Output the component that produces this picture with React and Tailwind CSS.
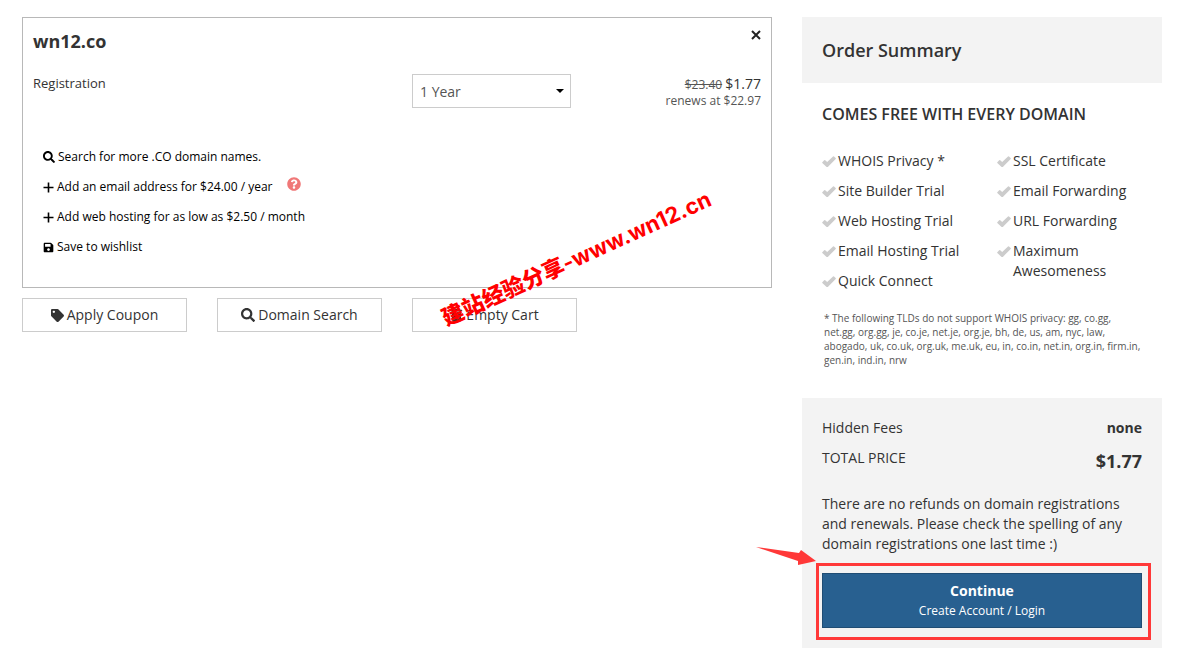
import { useState } from "react";
import { FaSearch, FaSave, FaTag, FaTrash, FaQuestionCircle } from "react-icons/fa";


const freeLeft = ["WHOIS Privacy *", "Site Builder Trial", "Web Hosting Trial", "Email Hosting Trial", "Quick Connect"];
const freeRight = ["SSL Certificate", "Email Forwarding", "URL Forwarding", "Maximum Awesomeness"];

const CheckIcon = () => (
	<svg viewBox="0 0 14 12" className="flex-none w-[14px] h-3 mt-[5px]" fill="#ccc">
		<path d="M0.3 6.2L2.2 4.2Q2.7 3.8 3.2 4.2L5.2 6L11 0.4Q11.5 0 12 0.4L13.7 2.1Q14 2.5 13.7 3L5.8 10.9Q5.2 11.3 4.6 10.9L0.3 7.1Q0 6.6 0.3 6.2Z" />
	</svg>
);

const PlusIcon = () => (
	<svg viewBox="0 0 11 11" className="size-[11px]" stroke="#000" strokeWidth="1.6">
		<path d="M5.5 0.5V10.5M0.5 5.5H10.5" />
	</svg>
);

const FeatureList = ({items}) => (
	<ul className="flex flex-col gap-[10px]">
		{items.map((item) => (
			<li key={item} className="flex gap-[2px] leading-5">
				<CheckIcon />
				<span>{item}</span>
			</li>
		))}
	</ul>
);

const ActionLink = ({icon, children}) => (
	<a href="#" className="flex items-center gap-[3px] h-[30px] w-max text-xs text-black">
		{icon}
		{children}
	</a>
);

const CartButton = ({icon, children}) => (
	<button className="flex items-center justify-center gap-[3px] h-[34px] bg-white border border-[#ccc] text-sm text-[#333]">
		{icon}
		{children}
	</button>
);

const CartItem = () => {
	let [term, setTerm] = useState("1");

	return (
		<div className="border border-[#b8b8b8] px-[10px] pt-[11px] pb-[25px]">
			<div className="flex justify-between items-start">
				<h2 className="text-lg leading-6 font-bold">wn12.co</h2>
				<button aria-label="Remove" className="flex size-[10px] mt-[1px]">
					<svg viewBox="0 0 10 10" className="size-[10px]" stroke="#222" strokeWidth="2">
						<path d="M1 1L9 9M9 1L1 9" />
					</svg>
				</button>
			</div>

			<div className="grid grid-cols-[379fr_159fr_190fr] mt-5">
				<label htmlFor="term" className="text-[13px] leading-5">Registration</label>
				<div className="relative mt-[1px]">
					<select id="term" value={term} onChange={(e) => setTerm(e.target.value)}
						className="appearance-none w-full h-[34px] pl-[7px] pt-[2px] bg-white border border-[#ccc] text-sm text-[#555]">
						<option value="1">1 Year</option>
						<option value="2">2 Years</option>
						<option value="5">5 Years</option>
					</select>
					<svg viewBox="0 0 8 4" className="absolute right-[7px] top-[15px] w-2 h-1 pointer-events-none">
						<path d="M0 0H8L4 4Z" />
					</svg>
				</div>
				<div className="text-right text-xs leading-4 text-[#555] pt-[3px]">
					<p><del>$23.40</del> <span className="text-sm leading-4 text-[#333]">$1.77</span></p>
					<p>renews at $22.97</p>
				</div>
			</div>

			{/* Extras */}
			<div className="mt-[33px] ml-[10px]">
				<ActionLink icon={<FaSearch className="size-3" />}>Search for more .CO domain names.</ActionLink>
				<div className="flex gap-[15px]">
					<ActionLink icon={<PlusIcon />}>Add an email address for $24.00 / year</ActionLink>
					<FaQuestionCircle className="size-[14px] mt-[5px] text-[#f07878]" />
				</div>
				<ActionLink icon={<PlusIcon />}>Add web hosting for as low as $2.50 / month</ActionLink>
				<ActionLink icon={<FaSave className="size-[11px]" />}>Save to wishlist</ActionLink>
			</div>
		</div>
	);
}

const OrderSummary = () => (
	<aside className="text-sm">
		<h2 className="bg-[#f3f3f3] px-5 py-[21px] text-lg leading-6 font-semibold">Order Summary</h2>

		<div className="px-5 pt-[19px] pb-[31px]">
			<h3 className="text-base leading-6 font-semibold">COMES FREE WITH EVERY DOMAIN</h3>
			<div className="grid grid-cols-[175fr_145fr] mt-[25px]">
				<FeatureList items={freeLeft} />
				<FeatureList items={freeRight} />
			</div>
			<p className="mt-5 ml-[2px] -mr-[2px] text-[10px] leading-[14px] text-[#555]">
				* The following TLDs do not support WHOIS privacy: gg, co.gg, net.gg, org.gg, je, co.je, net.je, org.je, bh, de, us, am, nyc, law, abogado, uk, co.uk, org.uk, me.uk, eu, in, co.in, net.in, org.in, firm.in, gen.in, ind.in, nrw
			</p>
		</div>

		<div className="bg-[#f3f3f3] px-5 pt-5 pb-5">
			<div className="flex justify-between leading-5">
				<span>Hidden Fees</span>
				<strong>none</strong>
			</div>
			<div className="flex justify-between items-start mt-[10px] leading-5">
				<span>TOTAL PRICE</span>
				<strong className="text-lg leading-[26px]">$1.77</strong>
			</div>
			<p className="mt-5 leading-5">
				There are no refunds on domain registrations and renewals. Please check the spelling of any domain registrations one last time :)
			</p>
			<div className="relative mt-[19px]">
				<button className="block w-full h-[55px] pt-[1px] bg-[#286090] border border-[#204d74] text-white">
					<span className="block font-bold leading-5">Continue</span>
					<span className="block text-xs leading-5">Create Account / Login</span>
				</button>
				<div className="absolute -top-[10px] -bottom-3 -left-[6px] -right-[9px] border-3 border-[#ff3838] pointer-events-none" />
				<svg viewBox="0 0 60 20" className="absolute -left-[66px] -top-[27px] w-[60px] h-5" fill="#ff3838">
					<path d="M0 1L43 7L45 4L60 15L42 19L42 15Z" />
				</svg>
			</div>
		</div>
	</aside>
);

const App = () => (
	<main className="grid grid-cols-[25fr_12fr] gap-[30px] items-start pt-[17px] pl-[22px] pr-[25px] pb-1 font-['Open_Sans',sans-serif] text-[#333]">
		<div className="relative">
			<CartItem />
			<div className="grid grid-cols-4 gap-[30px] mt-[10px]">
				<CartButton icon={<FaTag className="size-[13px]" />}>Apply Coupon</CartButton>
				<CartButton icon={<FaSearch className="size-[14px]" />}>Domain Search</CartButton>
				<CartButton icon={<FaTrash className="size-[13px]" />}>Empty Cart</CartButton>
			</div>
			{/* Watermark */}
			<div className="absolute left-[426px] bottom-[2px] origin-bottom-left -rotate-[24.5deg] flex items-baseline whitespace-nowrap leading-6 text-[#ff0000] pointer-events-none">
				<span className="text-[22px] font-black font-['Noto_Sans_CJK_SC',sans-serif]">建站经验分享</span>
				<span className="text-[22px] font-bold font-['Inter',sans-serif]">-www.wn12.cn</span>
			</div>
		</div>
		<OrderSummary />
	</main>
);

export default App;
